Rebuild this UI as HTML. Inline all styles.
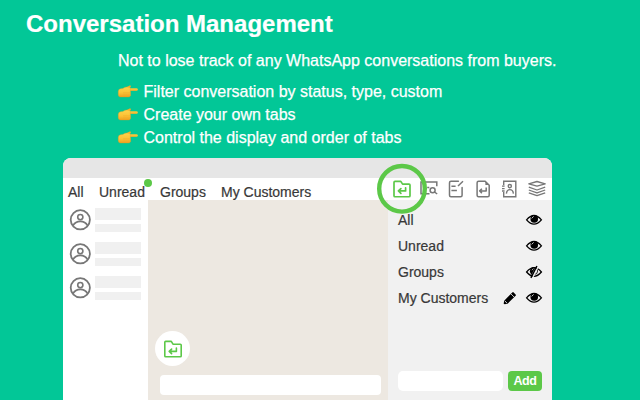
<!DOCTYPE html>
<html><head><meta charset="utf-8">
<style>
*{margin:0;padding:0;box-sizing:border-box}
html,body{width:640px;height:400px;overflow:hidden}
body{background:#02c797;font-family:"Liberation Sans",sans-serif;position:relative}
.a{position:absolute;white-space:nowrap}
.title{left:26px;top:12px;font-size:24px;line-height:24px;font-weight:bold;color:#fff;-webkit-text-stroke:0.2px #fff}
.sub{left:118px;top:52px;font-size:16px;line-height:18px;color:#fff;-webkit-text-stroke:0.25px #fff}
.bl{left:143.5px;font-size:16px;line-height:18px;color:#fff;-webkit-text-stroke:0.25px #fff}
.panel{left:63px;top:158px;width:489px;height:260px;background:#fff;border-radius:8px 8px 0 0;overflow:hidden}
.hdr{left:0;top:0;width:489px;height:20px;background:#e6e6e6}
.tab{top:26px;font-size:14px;line-height:16px;color:#383838;-webkit-text-stroke:0.2px #383838}
.dot{left:81px;top:21px;width:8px;height:8px;border-radius:50%;background:#5cc848}
.side{left:0;top:42px;width:85px;height:220px;background:#fff}
.chat{left:85px;top:42px;width:240px;height:220px;background:#ede8e1}
.rp{left:325px;top:42px;width:164px;height:220px;background:#f1f1f1}
.sk1{left:32px;width:46px;height:12px;background:#f0f0f0}
.sk2{left:32px;width:46px;height:8px;background:#f0f0f0}
.ri{left:10px;font-size:14px;line-height:16px;color:#383838;-webkit-text-stroke:0.2px #383838}
svg.ov{position:absolute;left:0;top:0;width:640px;height:400px}
</style></head><body>
<div class="a title">Conversation Management</div>
<div class="a sub">Not to lose track of any WhatsApp conversations from buyers.</div>
<div class="a bl" style="top:83px">Filter conversation by status, type, custom</div>
<div class="a bl" style="top:106px">Create your own tabs</div>
<div class="a bl" style="top:129px">Control the display and order of tabs</div>

<div class="a panel">
  <div class="a hdr"></div>
  <div class="a tab" style="left:5px">All</div>
  <div class="a tab" style="left:36px">Unread</div>
  <div class="a dot"></div>
  <div class="a tab" style="left:97px">Groups</div>
  <div class="a tab" style="left:158px">My Customers</div>
  <div class="a side">
    <div class="a sk1" style="top:8px"></div><div class="a sk2" style="top:24px"></div>
    <div class="a sk1" style="top:42px"></div><div class="a sk2" style="top:58px"></div>
    <div class="a sk1" style="top:76px"></div><div class="a sk2" style="top:92px"></div>
  </div>
  <div class="a chat">
    <div class="a" style="left:6.5px;top:130.5px;width:35px;height:35px;border-radius:50%;background:#fff"></div>
    <div class="a" style="left:12px;top:175px;width:221px;height:20px;border-radius:4px;background:#fff"></div>
  </div>
  <div class="a rp">
    <div class="a ri" style="top:12px">All</div>
    <div class="a ri" style="top:38px">Unread</div>
    <div class="a ri" style="top:64px">Groups</div>
    <div class="a ri" style="top:90px">My Customers</div>
    <div class="a" style="left:10px;top:171px;width:105px;height:20px;border-radius:5px;background:#fff"></div>
    <div class="a" style="left:120px;top:171px;width:34px;height:20px;border-radius:4px;background:#5cc848;color:#fff;font-weight:bold;font-size:12.5px;letter-spacing:-0.4px;line-height:20px;text-align:center">Add</div>
  </div>
</div>

<svg class="ov" viewBox="0 0 640 400">
  <defs>
    <linearGradient id="hg" x1="0" y1="0" x2="0" y2="1">
      <stop offset="0" stop-color="#ffd24a"/><stop offset="0.6" stop-color="#fcc236"/><stop offset="1" stop-color="#f0a020"/>
    </linearGradient>
    <g id="hand">
      <path d="M10 6.6 L15.6 3.6 Q17.2 3.1 16.8 4.7 L14 7.2 Z" fill="#f5ae28"/>
      <rect x="13.5" y="6.2" width="10.3" height="2.6" rx="1.3" fill="#fcc63a"/>
      <path d="M14 8.3 L23 8.3" stroke="#eea526" stroke-width="0.6"/>
      <path d="M4.3 9.2 Q4.4 7 6.6 6.8 L8.8 6.5 Q10.4 5 13 5 L16.2 5.6 L16.6 13.5 Q16.3 14.9 14.5 14.9 L6.3 14.9 Q4.3 14.9 4.3 12.8 Z" fill="url(#hg)" stroke="#eaa024" stroke-width="0.4"/>
      <path d="M9 10.8 L16.4 10.8 M9 12.9 L16.4 12.9" stroke="#f0aa2a" stroke-width="0.5"/>
    </g>
    <g id="av" fill="none" stroke="#777">
      <circle cx="0" cy="0" r="9.6" stroke-width="1.8"/>
      <circle cx="0" cy="-2.7" r="2.6" stroke-width="1.6"/>
      <path d="M-7.3 5.8 Q-5 1.6 0 1.6 Q5 1.6 7.3 5.8" stroke-width="1.6"/>
    </g>
    <g id="eye">
      <path d="M-7.4 0 Q0 -8.6 7.4 0 Q0 8.6 -7.4 0 Z" fill="none" stroke="#000" stroke-width="1.3"/>
      <circle cx="0.25" cy="-0.9" r="3.8" fill="#000"/>
      <path d="M-2.3 -1.4 L-0.4 -3.4" stroke="#fff" stroke-width="0.8" fill="none"/>
    </g>
  </defs>
  <use href="#hand" x="114" y="82"/>
  <use href="#hand" x="114" y="105"/>
  <use href="#hand" x="114" y="128"/>

  <use href="#av" x="80.3" y="219.8"/>
  <use href="#av" x="80.3" y="253.8"/>
  <use href="#av" x="80.3" y="287.8"/>

  <!-- top folder icon -->
  <g fill="none" stroke="#5cc848" stroke-width="1.7" stroke-linejoin="round" stroke-linecap="round">
    <path d="M394 182.4 Q394 181.35 395 181.35 L400.8 181.35 L402.6 184.1 L409 184.1 Q410 184.1 410 185.1 L410 195.75 Q410 196.75 409 196.75 L395 196.75 Q394 196.75 394 195.75 Z"/>
    <path d="M405.6 187.8 L405.6 190.9 L398.6 190.9 M400.9 188.6 L398.4 190.9 L400.9 193.3"/>
  </g>

  <!-- search window icon -->
  <g fill="none" stroke="#777" stroke-width="1.5">
    <path d="M429.5 193.8 L421 193.8 L421 182.1 L436.8 182.1 L436.8 186.2"/>
    <circle cx="432.6" cy="190.2" r="2.5"/>
    <path d="M434.5 192 L437.2 194 M427.2 187.6 L429.3 187.6"/>
  </g>
  <!-- note icon -->
  <g fill="none" stroke="#777" stroke-width="1.5">
    <path d="M458.4 181.3 L451 181.3 Q449.5 181.3 449.5 182.8 L449.5 195.2 Q449.5 196.7 451 196.7 L460.6 196.7 Q462.1 196.7 462.1 195.2 L462.1 187.4" stroke-linecap="round"/>
    <path d="M458 186 L463 181.3 M451.4 186.2 L455.6 186.2 M451.4 190.5 L456.9 190.5"/>
  </g>
  <!-- doc return icon -->
  <g fill="none" stroke="#777" stroke-width="1.5" stroke-linejoin="round">
    <path d="M485.2 181.3 L478.6 181.3 Q477.1 181.3 477.1 182.8 L477.1 195.2 Q477.1 196.7 478.6 196.7 L487.7 196.7 Q489.2 196.7 489.2 195.2 L489.2 185.2 Z"/>
    <path d="M486.2 187.6 L486.2 190.9 L479.8 190.9 M481.9 188.8 L479.7 190.9 L481.9 193.1"/>
  </g>
  <path d="M485.4 181.6 L488.9 185 L485.4 185 Z" fill="#777"/>
  <!-- contact book -->
  <g fill="none" stroke="#777" stroke-width="1.4">
    <path d="M503.7 185.2 L503.7 181.3 L515.8 181.3 L515.8 196.8 L503.7 196.8 L503.7 192"/>
    <path d="M502 186.2 L504.6 186.2 M502 188.6 L504.6 188.6 M502 191 L504.6 191" stroke-width="1.3"/>
    <circle cx="509.8" cy="186.1" r="1.6"/>
    <path d="M506.4 193.6 Q506.8 189.6 509.9 189.6 Q513 189.6 513.4 193.6"/>
  </g>
  <!-- layers -->
  <g fill="none" stroke="#777" stroke-width="1.4" stroke-linejoin="round">
    <path d="M537 181.5 L545.2 183.8 L537 186.1 L528.8 183.8 Z"/>
    <path d="M528.8 187.2 L537 190 L545.2 187.2 M528.8 190 L537 192.9 L545.2 190 M528.8 192.8 L537 195.7 L545.2 192.8" stroke-width="1.3"/>
  </g>

  <!-- chat circle folder -->
  <g fill="none" stroke="#5cc848" stroke-width="1.6" stroke-linejoin="round" stroke-linecap="round" transform="translate(0 0.5)">
    <path d="M164.8 341.8 Q164.8 340.9 165.7 340.9 L171.3 340.9 L173 343.7 L180.3 343.7 Q181.2 343.7 181.2 344.6 L181.2 355.4 Q181.2 356.3 180.3 356.3 L165.7 356.3 Q164.8 356.3 164.8 355.4 Z"/>
    <path d="M176.4 347.5 L176.4 350.9 L169.4 350.9 M171.6 348.6 L169.2 350.9 L171.6 353.2"/>
  </g>

  <use href="#eye" x="534" y="219.8"/>
  <use href="#eye" x="534" y="245.8"/>
  <use href="#eye" x="534" y="297.8"/>
  <!-- slashed eye -->
  <defs>
    <clipPath id="cl"><path d="M520 262 L538.1 262 L527.9 282 L520 282Z"/></clipPath>
    <clipPath id="cr"><path d="M540.3 262 L550 262 L550 282 L530.1 282Z"/></clipPath>
  </defs>
  <g>
    <path d="M526.6 272 Q534 263.4 541.4 272 Q534 280.6 526.6 272 Z" fill="none" stroke="#000" stroke-width="1.3"/>
    <circle cx="534.1" cy="271.2" r="4.2" fill="#000" clip-path="url(#cl)"/>
    <path d="M531.9 270.2 L533.4 268.6" stroke="#fff" stroke-width="0.7"/>
    <circle cx="534.25" cy="271.1" r="3.3" fill="none" stroke="#000" stroke-width="0.9" clip-path="url(#cr)"/>
    <path d="M538.4 266.3 L532.4 278" stroke="#f1f1f1" stroke-width="1.3"/>
    <path d="M536.9 266 L530.9 277.8" stroke="#000" stroke-width="1.5"/>
  </g>
  <!-- pencil -->
  <g transform="translate(510.1 298) rotate(-45)">
    <rect x="-6" y="-2.3" width="12.4" height="4.6" rx="0.6" fill="#000"/>
    <path d="M-6 -2.3 L-8.6 -0.5 L-8.3 0.6 L-6 2.3 Z" fill="#000"/>
    <path d="M-5.8 -1.4 L-5.8 1.6 M3.5 -2.3 L3.5 2.3" stroke="#f1f1f1" stroke-width="0.8"/>
  </g>
  <circle cx="402" cy="188.8" r="22.8" fill="none" stroke="#5cc848" stroke-width="4.4"/>
</svg>
</body></html>
